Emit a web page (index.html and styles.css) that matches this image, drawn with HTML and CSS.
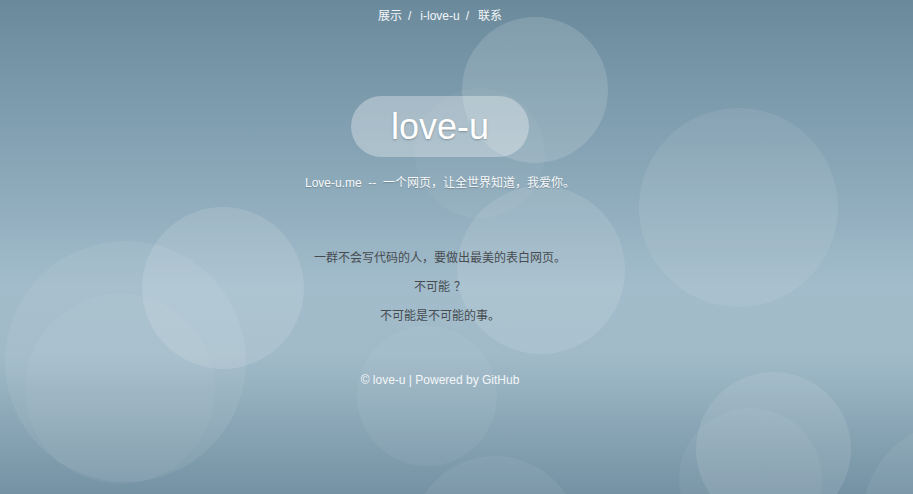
FILE: index.html
```html
<!DOCTYPE html>
<html lang="zh-CN">
<head>
<meta charset="utf-8">
<title>love-u</title>
<link rel="stylesheet" href="styles.css">
</head>
<body>
<div class="bubbles">
  <span class="b b1"></span>
  <span class="b b2"></span>
  <span class="b b3"></span>
  <span class="b b4"></span>
  <span class="b b5"></span>
  <span class="b b6"></span>
  <span class="b b7"></span>
  <span class="b b8"></span>
  <span class="b b9"></span>
  <span class="b b10"></span>
  <span class="b b11"></span>
  <span class="b b12"></span>
</div>
<div class="page">
  <nav class="nav">
    <a href="#">展示</a><span class="sep">/</span><a href="#">i-love-u</a><span class="sep">/</span><a href="#">联系</a>
  </nav>
  <header class="hero">
    <h1 class="title">love-u</h1>
    <p class="tagline">Love-u.me&nbsp; -- &nbsp;一个网页，让全世界知道，我爱你。</p>
  </header>
  <main class="content">
    <p>一群不会写代码的人，要做出最美的表白网页。</p>
    <p>不可能<span class="qmark">？</span></p>
    <p>不可能是不可能的事。</p>
  </main>
  <footer class="footer">© love-u | Powered by GitHub</footer>
</div>
</body>
</html>
```
FILE: styles.css
```css
html, body {
  margin: 0;
  padding: 0;
  height: 100%;
}
body {
  position: relative;
  overflow: hidden;
  font-family: "Liberation Sans", "Noto Sans CJK SC", Arial, sans-serif;
  font-size: 12px;
  background: linear-gradient(to bottom, #6a8a9c 0%, #85a3b4 30%, #a2bccb 58%, #a0bac8 72%, #7492a4 100%);
}
.bubbles {
  position: absolute;
  inset: 0;
  overflow: hidden;
  z-index: 0;
}
.b {
  position: absolute;
  border-radius: 50%;
}
.b1 { left: 462px; top: 17px; width: 146px; height: 146px; background: rgba(255,255,255,0.14); }
.b2 { left: 415px; top: 88px; width: 130px; height: 130px; background: rgba(255,255,255,0.04); }
.b3 { left: 639px; top: 108px; width: 199px; height: 199px; background: rgba(255,255,255,0.08); }
.b4 { left: 457px; top: 186px; width: 168px; height: 168px; background: rgba(255,255,255,0.11); }
.b5 { left: 142px; top: 207px; width: 162px; height: 162px; background: rgba(255,255,255,0.12); }
.b6 { left: 5px; top: 241px; width: 241px; height: 241px; background: rgba(255,255,255,0.07); }
.b7 { left: 25px; top: 294px; width: 190px; height: 190px; background: rgba(255,255,255,0.04); }
.b8 { left: 357px; top: 326px; width: 140px; height: 140px; background: rgba(255,255,255,0.05); }
.b9 { left: 696px; top: 372px; width: 155px; height: 155px; background: rgba(255,255,255,0.10); }
.b10 { left: 679px; top: 408px; width: 143px; height: 143px; background: rgba(255,255,255,0.05); }
.b11 { left: 862px; top: 420px; width: 200px; height: 200px; background: rgba(255,255,255,0.06); }
.b12 { left: 410px; top: 456px; width: 170px; height: 170px; background: rgba(255,255,255,0.06); }

.page {
  position: relative;
  z-index: 1;
  width: 880px;
  display: flex;
  flex-direction: column;
  align-items: center;
  text-align: center;
}
.nav {
  display: flex;
  align-items: center;
  height: 14px;
  margin-top: 9px;
  line-height: 14px;
  color: #f4f6f8;
}
.nav a {
  color: #f4f6f8;
  text-decoration: none;
}
.sep {
  margin: 0 9px 0 6px;
}
.hero {
  display: flex;
  flex-direction: column;
  align-items: center;
  margin-top: 73px;
}
.title {
  margin: 0;
  height: 61px;
  padding: 0 40px;
  border-radius: 31px;
  background: rgba(255,255,255,0.32);
  color: #ffffff;
  font-weight: normal;
  font-size: 36px;
  line-height: 61px;
  text-shadow: 0 1px 2px rgba(0,0,0,0.25);
}
.tagline {
  margin: 19px 0 0;
  line-height: 14px;
  color: #f7f9fa;
  text-shadow: 0 1px 1px rgba(0,0,0,0.2);
}
.content {
  margin-top: 61px;
  color: #474c50;
}
.content p {
  margin: 0 0 15px;
  line-height: 14px;
}
.qmark {
  margin-left: 4px;
}
.footer {
  margin-top: 35px;
  line-height: 14px;
  color: #f4f6f8;
}
```
